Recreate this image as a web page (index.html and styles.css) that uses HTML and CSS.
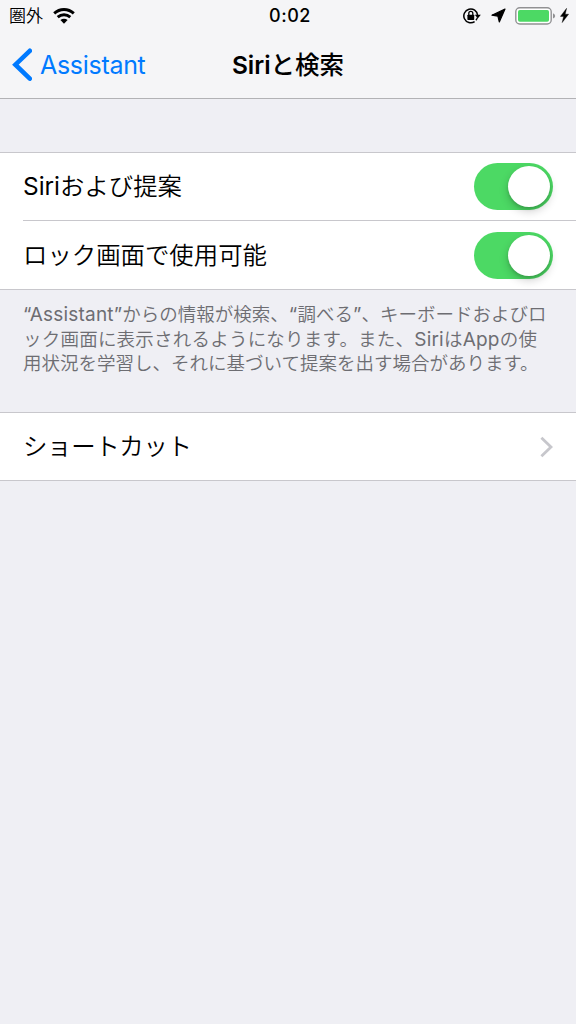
FILE: index.html
```html
<!DOCTYPE html>
<html lang="ja">
<head>
    <meta charset="UTF-8">
    <title>Siriと検索</title>
    <link rel="stylesheet" href="styles.css">
</head>
<body>
    <header class="header">
        <div class="status-bar">
            <div class="status-left">
                <span class="carrier">圏外</span>
                <svg class="wifi" width="22" height="16" viewBox="0 0 22 16">
                    <g fill="none" stroke="#000" stroke-width="2.9">
                        <path d="M1.2 5.4C6.8 .2 15.2 .2 20.8 5.4"/>
                        <path d="M4.7 9.2C8.4 5.9 13.6 5.9 17.3 9.2"/>
                    </g>
                    <path d="M7.4 12.1C9.5 10.4 12.5 10.4 14.6 12.1L11 15.7Z"/>
                </svg>
            </div>
            <span class="clock">0:02</span>
            <div class="status-right">
                <svg class="lock" width="18" height="16" viewBox="0 0 18 16">
                    <path d="M11.6 13.6A6.9 6.9 0 1 1 14.6 7.2" fill="none" stroke="#000" stroke-width="1.5"/>
                    <path d="M11.8 6.7H17.8L14.8 10.5Z"/>
                    <path d="M14.4 9.6A7 7 0 0 1 12.9 12.3" fill="none" stroke="#000" stroke-width="1.4"/>
                    <rect x="4.4" y="6.7" width="6.8" height="5.2" rx=".6"/>
                    <path d="M5.8 7V5.3a2 2 0 0 1 4 0V7" fill="none" stroke="#000" stroke-width="1.3"/>
                </svg>
                <svg class="location" width="15" height="15" viewBox="0 0 15 15">
                    <path d="M14 1 8.3 13.9 6.9 8.1 .9 7.2Z" stroke="#000" stroke-width="1.2" stroke-linejoin="round"/>
                </svg>
                <svg class="battery" width="41" height="18" viewBox="0 0 41 18">
                    <rect x=".8" y=".8" width="35.4" height="16.2" rx="4" fill="#fff" stroke="#919193" stroke-width="1.4"/>
                    <rect x="3" y="3" width="31" height="11.8" rx="1.8" fill="#4cd964"/>
                    <path d="M38 6.2Q40.2 7.2 40.2 8.9T38 11.6Z" fill="#919193"/>
                </svg>
                <svg class="bolt" width="9" height="15" viewBox="0 0 9 15">
                    <path d="M6.6 .3 .4 8.4H3.6L2.2 14.6 8.6 6.2H5.2Z" stroke="#000" stroke-width=".4"/>
                </svg>
            </div>
        </div>
        <div class="nav-bar">
            <a class="back">
                <svg width="20" height="34" viewBox="0 0 20 34">
                    <path d="M17.8 2.8 3.4 16.7 17.8 30.6" fill="none" stroke="#007aff" stroke-width="4.6" stroke-linecap="round" stroke-linejoin="miter"/>
                </svg>
                <span class="back-label">Assistant</span>
            </a>
            <h1 class="title"><span class="title-latin">Siri</span>と検索</h1>
        </div>
    </header>

    <main>
        <ul class="group">
            <li class="row">
                <span class="row-label"><span class="latin">Siri</span>および提案</span>
                <span class="switch"></span>
            </li>
            <li class="row">
                <span class="row-label">ロック画面で使用可能</span>
                <span class="switch"></span>
            </li>
        </ul>
        <p class="note">
            <span class="note-line"><span class="latin">“Assistant”</span>からの情報が検索、<span class="latin">“</span>調べる<span class="latin">”</span>、キーボードおよびロ</span>
            <span class="note-line note-line-wide">ック画面に表示されるようになります。また、<span class="latin">Siri</span>は<span class="latin">App</span>の使</span>
            <span class="note-line">用状況を学習し、それに基づいて提案を出す場合があります。</span>
        </p>
        <ul class="group">
            <li class="row">
                <span class="row-label row-label-kana">ショートカット</span>
                <svg class="chevron" width="14" height="22" viewBox="0 0 14 22">
                    <path d="M2.4 1.8 12 11 2.4 20.2" fill="none" stroke="#c7c7cc" stroke-width="2.8"/>
                </svg>
            </li>
        </ul>
    </main>
</body>
</html>
```

FILE: styles.css
```css
* {
    margin: 0;
    padding: 0;
    box-sizing: border-box;
}

body {
    min-height: 1024px;
    background-color: #efeff4;
    color: #000;
    font-family: Inter, "Noto Sans CJK JP", sans-serif;
    overflow: hidden;
}

.header {
    height: 99px;
    background-color: #f5f5f7;
    border-bottom: 1px solid #b2b2b5;
}

/* Status bar */
.status-bar {
    display: grid;
    grid-template-columns: 1fr auto 1fr;
    align-items: center;
    height: 31px;
    padding: 0 7px 0 9px;
}

.status-left,
.status-right {
    display: flex;
    align-items: center;
}

.carrier {
    font-size: 17px;
    font-weight: 350;
    line-height: 30px;
}

.wifi {
    margin-left: 10px;
}

.clock {
    padding-left: 2px;
    font-size: 18px;
    font-weight: 500;
    line-height: 31px;
    letter-spacing: 0.5px;
}

.status-right {
    justify-content: flex-end;
}

.location {
    margin-left: 10px;
}

.battery {
    margin-left: 9px;
}

.bolt {
    margin-left: 4px;
}

/* Navigation bar */
.nav-bar {
    display: grid;
    grid-template-columns: 1fr auto 1fr;
    align-items: center;
    height: 67px;
    padding: 0 12px;
}

.back {
    display: flex;
    align-items: center;
    color: #007aff;
}

.back-label {
    margin-left: 8px;
    font-size: 25px;
    line-height: 34px;
    letter-spacing: -0.3px;
}

.title {
    font-size: 24.5px;
    font-weight: 500;
    line-height: 36px;
}

.title-latin {
    font-weight: 600;
}

/* Settings rows */
.group {
    margin-top: 53px;
    background-color: #fff;
    border-top: 1px solid #c8c7cc;
    border-bottom: 1px solid #c8c7cc;
    list-style: none;
}

.row {
    display: flex;
    align-items: center;
    justify-content: space-between;
    height: 67px;
    margin-left: 23px;
    padding-right: 23px;
}

.row + .row {
    height: 69px;
    padding-top: 1px;
    border-top: 1px solid #c8c7cc;
}

.row-label {
    padding-bottom: 2px;
    font-size: 24.4px;
    font-weight: 350;
    line-height: 36px;
}

.row-label-kana {
    letter-spacing: -0.3px;
}

.latin {
    font-weight: 400;
}

.switch {
    position: relative;
    width: 79px;
    height: 47px;
    background-color: #4cd964;
    border-radius: 24px;
}

.switch::before {
    position: absolute;
    content: "";
    top: 3px;
    right: 3px;
    width: 42px;
    height: 41px;
    background-color: #fff;
    border-radius: 50%;
    box-shadow: 0 4px 10px rgba(0, 0, 0, 0.2), 0 2px 3px rgba(0, 0, 0, 0.12);
}

.note {
    height: 122px;
    padding: 12px 23px 0;
    color: #6d6d72;
    font-size: 18.5px;
    font-weight: 350;
    line-height: 24.5px;
}

.note-line {
    display: block;
    height: 24.5px;
    white-space: nowrap;
}

.note-line .latin {
    font-size: 19px;
    letter-spacing: 0.2px;
}

.note-line-wide {
    letter-spacing: 0.22px;
}

.note + .group {
    margin-top: 0;
}
```
